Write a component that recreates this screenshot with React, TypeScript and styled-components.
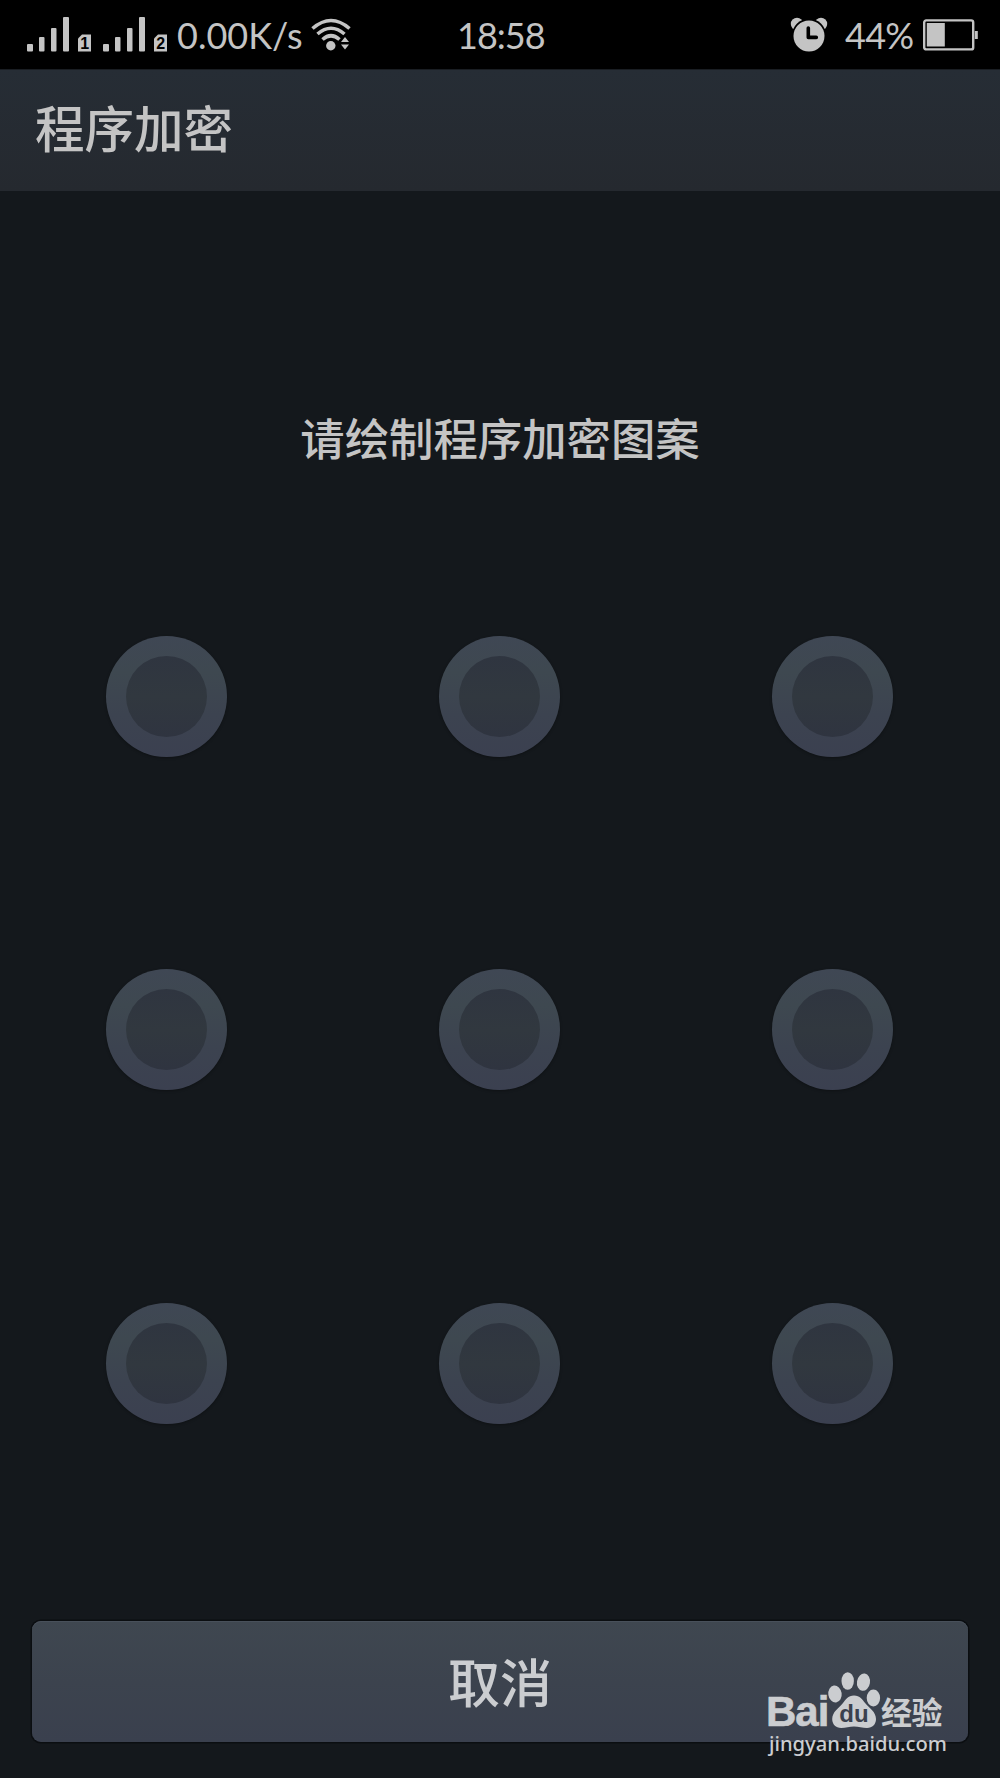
import React from "react";
import styled, { createGlobalStyle } from "styled-components";

const ink = "#c4c4c4";

const GlobalStyle = createGlobalStyle`
  * { box-sizing: border-box; }
  body { margin: 0; background: #14181c; }
`;

const Screen = styled.div`
  position: relative;
  display: flex;
  flex-direction: column;
  width: 1000px;
  height: 1778px;
  overflow: hidden;
  background: #14181c;
  color: ${ink};
  font-family: "Noto Sans", "Noto Sans CJK SC", sans-serif;
`;

const StatusBar = styled.header`
  display: grid;
  grid-template-columns: 1fr auto 1fr;
  align-items: center;
  height: 69px;
  padding: 0 22px 0 27px;
  background: #000;
`;

const StatusGroup = styled.div<{ $end?: boolean }>`
  display: flex;
  align-items: center;
  justify-content: ${(p) => (p.$end ? "flex-end" : "flex-start")};
  height: 69px;
  svg { display: block; flex: none; }
`;

const StatusText = styled.span<{ $width: number; $spacing?: number }>`
  width: ${(p) => p.$width}px;
  font-family: Lato, sans-serif;
  font-size: 36px;
  line-height: 68px;
  letter-spacing: ${(p) => p.$spacing ?? 0}px;
  white-space: nowrap;
`;

const Speed = styled(StatusText)`margin-left: -2px;`;
const Percent = styled(StatusText)`margin: 0 9px 0 17px;`;
const Clock = styled(StatusText)`margin-right: 3px;`;

const TitleBar = styled.div`
  display: flex;
  align-items: center;
  height: 122px;
  padding: 0 35px 4px;
  background: linear-gradient(#262d35, #25292f);
  border-top: 1px solid #1a1e23;
`;

const Title = styled.h1`
  margin: 0;
  font-size: 49.5px;
  line-height: 60px;
  font-weight: 500;
`;

const Prompt = styled.p`
  margin: 218px 0 0;
  text-align: center;
  font-size: 44.4px;
  line-height: 60px;
  font-weight: 500;
`;

const PatternGrid = styled.div`
  display: grid;
  grid-template-columns: repeat(3, 121px);
  grid-auto-rows: 121px;
  gap: 212.4px;
  margin: 167px 0 0 105.5px;
`;

const Node = styled.div`
  display: flex;
  align-items: center;
  justify-content: center;
  border-radius: 50%;
  background: linear-gradient(#3f4754, #3e4850 30%, #3c4350 65%, #3b4050);
  box-shadow: 0 1px 3px rgba(0, 0, 0, 0.3);
  &::after {
    content: "";
    width: 81px;
    height: 81px;
    border-radius: 50%;
    background: linear-gradient(#2f3540, #31383f 50%, #2f3440);
  }
`;

const CancelButton = styled.button`
  width: 936px;
  height: 121px;
  margin: auto auto 36px;
  padding: 0 0 3px;
  border: 0;
  border-radius: 9px;
  background: linear-gradient(#3f4750, #3c434e 50%, #3a404e);
  box-shadow: 0 0 0 1.5px #0b0e11, inset 0 1px #48505a;
  color: #cbcdd0;
  font-family: "Noto Sans CJK SC", sans-serif;
  font-size: 52px;
  font-weight: 500;
`;

const Watermark = styled.div`
  position: absolute;
  left: 766px;
  top: 1669px;
  width: 190px;
  color: #cbcdd0;
`;

const Brand = styled.div`
  display: flex;
  align-items: flex-end;
  height: 60px;
`;

const Bai = styled.span`
  width: 64px;
  font: 700 42px/30px "Liberation Sans", sans-serif;
  letter-spacing: -1px;
  -webkit-text-stroke: 0.6px currentColor;
  margin-bottom: 2px;
`;

const Experience = styled.span`
  margin-left: 0;
  font: 700 31px/30px "Noto Sans CJK SC", sans-serif;
  letter-spacing: -0.5px;
  margin-bottom: 3px;
`;

const Site = styled.div`
  padding: 2px 0 0 3px;
  font: 500 20.2px/24px "Noto Sans", sans-serif;
  white-space: nowrap;
`;

const Paw = styled.svg`
  display: block;
  flex: none;
  margin: 0 0 0 -3px;
`;

const signalBars = [
  { x: 0, y: 27, w: 6 },
  { x: 12, y: 20, w: 5.5 },
  { x: 24, y: 11, w: 5.5 },
  { x: 36, y: 0, w: 6 },
];

const Signal = ({ sim }: { sim: string }) => (
  <svg width="76" height="36" viewBox="0 0 76 36" fill={ink}>
    {signalBars.map((b) => (
      <rect key={b.x} x={b.x} y={b.y} width={b.w} height={34.5 - b.y} rx="1" />
    ))}
    <path d="M55 17.5h9v17H51V21.5z" />
    <text x="57.7" y="32.2" textAnchor="middle" fill="#000" fontFamily="Liberation Sans" fontWeight="700" fontSize="16">
      {sim}
    </text>
  </svg>
);

const Wifi = () => (
  <svg width="40" height="34" viewBox="0 0 40 34" fill="none" stroke={ink} strokeWidth="3.6" strokeLinecap="butt">
    <path d="M1.5 10.5Q20-5.5 38.5 10.5M6.5 16Q20 4.5 33.5 16M11.5 21.5Q20 14 28.5 21.5" />
    <circle cx="19.8" cy="27.7" r="4.7" fill={ink} stroke="none" />
    <path d="M30 24l4-5 4 5zM30 26.5l4 5 4-5z" fill={ink} stroke="none" />
  </svg>
);

const Alarm = () => (
  <svg width="38" height="36" viewBox="0 0 38 36" fill={ink}>
    <circle cx="7" cy="7" r="6.2" />
    <circle cx="31" cy="7" r="6.2" />
    <circle cx="19" cy="19" r="17.3" fill="#000" />
    <circle cx="19" cy="19" r="15.5" />
    <path d="M18.3 11v9.4h8" fill="none" stroke="#000" strokeWidth="3.6" strokeLinecap="round" strokeLinejoin="round" />
  </svg>
);

const Battery = () => (
  <svg width="55" height="32" viewBox="0 0 55 32" fill={ink}>
    <rect x="1.2" y="1.4" width="49" height="29" rx="2" fill="none" stroke={ink} strokeWidth="2.4" />
    <rect x="3.8" y="4" width="18" height="23.5" />
    <rect x="51.8" y="12" width="3" height="8" />
  </svg>
);

export default function App() {
  return (
    <Screen>
      <GlobalStyle />
      <StatusBar>
        <StatusGroup>
          <Signal sim="1" />
          <Signal sim="2" />
          <Speed $width={134}>0.00K/s</Speed>
          <Wifi />
        </StatusGroup>
        <Clock $width={88} $spacing={-1}>18:58</Clock>
        <StatusGroup $end>
          <Alarm />
          <Percent $width={69} $spacing={-0.7}>44%</Percent>
          <Battery />
        </StatusGroup>
      </StatusBar>
      <TitleBar>
        <Title>程序加密</Title>
      </TitleBar>
      <Prompt>请绘制程序加密图案</Prompt>
      <PatternGrid>
        {Array.from({ length: 9 }, (_, i) => (
          <Node key={i} />
        ))}
      </PatternGrid>
      <CancelButton>取消</CancelButton>
      <Watermark>
        <Brand>
          <Bai>Bai</Bai>
          <Paw width="54" height="60" viewBox="0 0 54 60" fill="#cbcdd0">
            <ellipse cx="8" cy="25" rx="6.7" ry="8.5" transform="rotate(-8 8 25)" />
            <ellipse cx="20.7" cy="12" rx="6.2" ry="8.7" />
            <ellipse cx="36.5" cy="13.2" rx="6.5" ry="8.7" transform="rotate(9 36.5 13)" />
            <ellipse cx="46.4" cy="29" rx="6.7" ry="8.5" />
            <path d="M27 26.5c-6 0-8.4 4.3-11.2 7.7C12 39 5.2 42.6 5.2 50c0 5.2 3.6 9 9 9 4.5 0 8.2-1.4 12.8-1.4S35.5 59 40 59c5.4 0 9-3.8 9-9 0-7.4-6.8-11-10.7-15.8C35.4 30.8 33 26.5 27 26.5z" />
            <text x="27" y="52.8" textAnchor="middle" fill="#3b414e" fontFamily="Liberation Sans" fontWeight="700" fontSize="24">du</text>
          </Paw>
          <Experience>经验</Experience>
        </Brand>
        <Site>jingyan.baidu.com</Site>
      </Watermark>
    </Screen>
  );
}
